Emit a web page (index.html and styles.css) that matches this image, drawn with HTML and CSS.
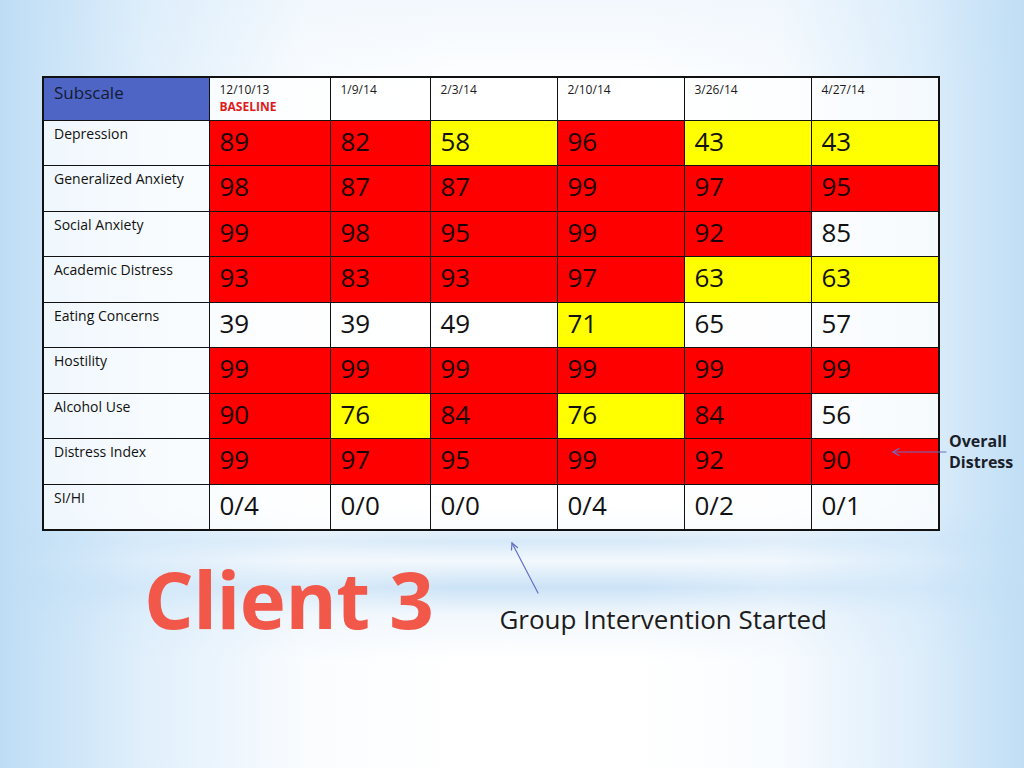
FILE: index.html
```html
<!DOCTYPE html>
<html>
<head>
<meta charset="utf-8">
<link rel="stylesheet" href="styles.css">
</head>
<body>
<div class="slide">
  <table class="scores">
    <colgroup>
      <col class="c0"><col class="c1"><col class="c2"><col class="c3"><col class="c4"><col class="c5"><col class="c6">
    </colgroup>
    <thead>
      <tr class="head">
        <th class="sub">Subscale</th>
        <th class="date">12/10/13<span class="base">BASELINE</span></th>
        <th class="date">1/9/14</th>
        <th class="date">2/3/14</th>
        <th class="date">2/10/14</th>
        <th class="date">3/26/14</th>
        <th class="date">4/27/14</th>
      </tr>
    </thead>
    <tbody>
      <tr><td class="lab">Depression</td><td class="r">89</td><td class="r">82</td><td class="y">58</td><td class="r">96</td><td class="y">43</td><td class="y">43</td></tr>
      <tr><td class="lab">Generalized Anxiety</td><td class="r">98</td><td class="r">87</td><td class="r">87</td><td class="r">99</td><td class="r">97</td><td class="r">95</td></tr>
      <tr><td class="lab">Social Anxiety</td><td class="r">99</td><td class="r">98</td><td class="r">95</td><td class="r">99</td><td class="r">92</td><td class="w">85</td></tr>
      <tr><td class="lab">Academic Distress</td><td class="r">93</td><td class="r">83</td><td class="r">93</td><td class="r">97</td><td class="y">63</td><td class="y">63</td></tr>
      <tr><td class="lab">Eating Concerns</td><td class="w">39</td><td class="w">39</td><td class="w">49</td><td class="y">71</td><td class="w">65</td><td class="w">57</td></tr>
      <tr><td class="lab">Hostility</td><td class="r">99</td><td class="r">99</td><td class="r">99</td><td class="r">99</td><td class="r">99</td><td class="r">99</td></tr>
      <tr><td class="lab">Alcohol Use</td><td class="r">90</td><td class="y">76</td><td class="r">84</td><td class="y">76</td><td class="r">84</td><td class="w">56</td></tr>
      <tr><td class="lab">Distress Index</td><td class="r">99</td><td class="r">97</td><td class="r">95</td><td class="r">99</td><td class="r">92</td><td class="r">90</td></tr>
      <tr><td class="lab">SI/HI</td><td class="w">0/4</td><td class="w">0/0</td><td class="w">0/0</td><td class="w">0/4</td><td class="w">0/2</td><td class="w">0/1</td></tr>
    </tbody>
  </table>

  <div class="caption">
    <h1 class="client">Client 3</h1>
    <p class="note">Group Intervention Started</p>
  </div>

  <div class="callout">Overall<br>Distress</div>

  <svg class="arrows" width="1024" height="768" viewBox="0 0 1024 768">
    <g stroke="#6470c6" stroke-width="1.2" fill="none" stroke-linecap="round">
      <line x1="946" y1="452" x2="893" y2="452"/>
      <polyline points="899,448.5 893,452 899,455.5"/>
      <line x1="538" y1="593" x2="512" y2="543"/>
      <polyline points="511.5,550 512,543 517.5,547.5"/>
    </g>
  </svg>
</div>
</body>
</html>
```

FILE: styles.css
```css
html, body {
  margin: 0;
  padding: 0;
}
body {
  font-family: "Open Sans", "Noto Sans", sans-serif;
  color: #111;
}
.slide {
  position: relative;
  width: 1024px;
  height: 768px;
  overflow: hidden;
  box-sizing: border-box;
  padding: 76px 0 0 42px;
  background:
    linear-gradient(to right,
      rgba(190, 221, 245, 1) 0%,
      rgba(214, 234, 250, 0.75) 14%,
      rgba(240, 247, 253, 0.35) 30%,
      rgba(255, 255, 255, 0) 45%,
      rgba(255, 255, 255, 0) 62%,
      rgba(238, 246, 253, 0.4) 76%,
      rgba(212, 233, 250, 0.8) 90%,
      rgba(192, 222, 245, 1) 100%),
    linear-gradient(to bottom,
      rgba(255, 255, 255, 0) 66%,
      rgba(205, 228, 247, 0.8) 70.5%,
      rgba(225, 238, 250, 0.4) 73%,
      rgba(198, 224, 246, 0.9) 76.5%,
      rgba(225, 238, 250, 0.45) 80%,
      rgba(255, 255, 255, 0) 86%),
    linear-gradient(to bottom, #f2f8fd 0%, #ffffff 12%, #ffffff 100%);
}
.scores {
  border-collapse: collapse;
  table-layout: fixed;
  width: 896px;
  border: 2px solid #111;
}
.c0 { width: 166px; }
.c1 { width: 121px; }
.c2 { width: 100px; }
.c3 { width: 127px; }
.c4 { width: 127px; }
.c5 { width: 127px; }
.c6 { width: 128px; }

.scores th, .scores td {
  border: 1px solid #111;
  padding: 3px 10px 0;
  vertical-align: top;
  text-align: left;
  font-weight: normal;
  box-sizing: border-box;
}
.head th {
  height: 43px;
  background: rgba(255, 255, 255, 0.7);
}
.scores tbody tr {
  height: 45.5px;
}
.head .sub {
  background: #4e65c6;
  font-size: 17px;
  color: #141a33;
  padding-top: 3px;
}
.date {
  font-size: 12px;
  line-height: 17px;
  padding-top: 4px;
  color: #1a1a1a;
}
.base {
  display: block;
  color: #e01a1a;
  font-weight: 700;
}
.lab {
  font-size: 14px;
  line-height: 19px;
  padding-top: 4px;
  background: rgba(255, 255, 255, 0.72);
}
.r, .y, .w {
  font-size: 26px;
  line-height: 34px;
  padding-top: 6px;
}
.r { background: #ff0000; color: #1a0000; }
.y { background: #ffff00; color: #111; }
.w { background: rgba(255, 255, 255, 0.75); color: #111; }

.caption {
  display: flex;
  align-items: baseline;
  margin: 29px 0 0 102px;
}
.client {
  margin: 0;
  font-size: 78px;
  line-height: 78px;
  font-weight: 700;
  color: #f2584a;
  letter-spacing: -0.5px;
}
.note {
  margin: 0 0 0 66px;
  font-size: 26px;
  color: #1c1c1c;
}
.callout {
  position: absolute;
  left: 949px;
  top: 431px;
  font-size: 16px;
  line-height: 21px;
  font-weight: 700;
  color: #1a1e2a;
}
.arrows {
  position: absolute;
  left: 0;
  top: 0;
  pointer-events: none;
}
```
